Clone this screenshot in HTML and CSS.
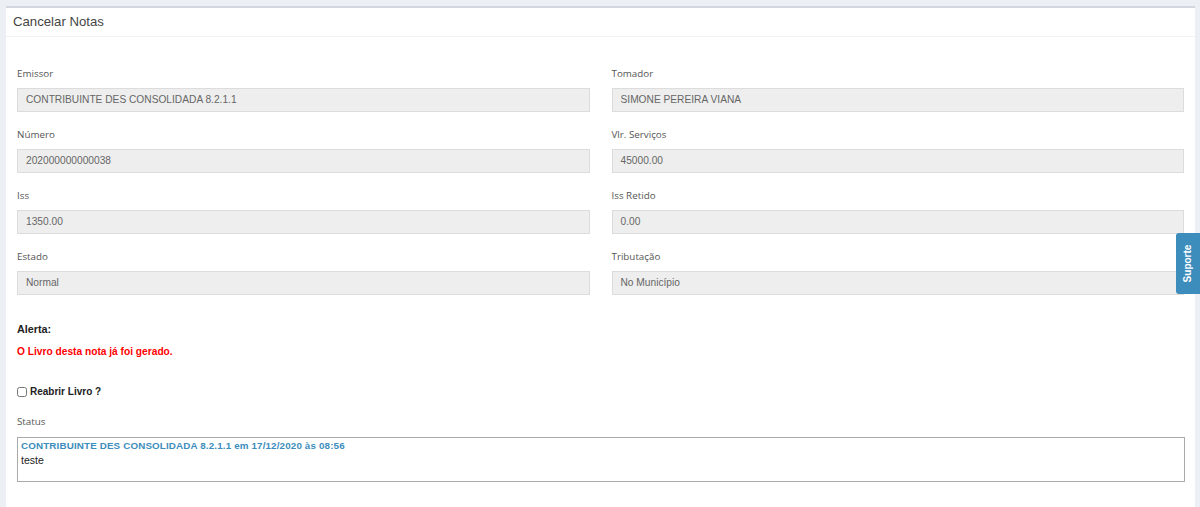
FILE: index.html
```html
<!DOCTYPE html>
<html lang="pt">
<head>
<meta charset="utf-8">
<title>Cancelar Notas</title>
<link rel="stylesheet" href="styles.css">
</head>
<body>
<div class="box">
  <div class="box-header">Cancelar Notas</div>
  <div class="box-body">
    <div class="grid">
      <div class="field"><label class="lbl">Emissor</label><div class="input">CONTRIBUINTE DES CONSOLIDADA 8.2.1.1</div></div>
      <div class="field"><label class="lbl">Tomador</label><div class="input">SIMONE PEREIRA VIANA</div></div>
      <div class="field"><label class="lbl">Número</label><div class="input">202000000000038</div></div>
      <div class="field"><label class="lbl">Vlr. Serviços</label><div class="input">45000.00</div></div>
      <div class="field"><label class="lbl">Iss</label><div class="input">1350.00</div></div>
      <div class="field"><label class="lbl">Iss Retido</label><div class="input">0.00</div></div>
      <div class="field"><label class="lbl">Estado</label><div class="input">Normal</div></div>
      <div class="field"><label class="lbl">Tributação</label><div class="input">No Município</div></div>
    </div>
    <div class="alert-title">Alerta:</div>
    <div class="alert-msg">O Livro desta nota já foi gerado.</div>
    <label class="check"><input type="checkbox"><span>Reabrir Livro ?</span></label>
    <label class="lbl status-lbl">Status</label>
    <div class="status">
      <div class="status-head">CONTRIBUINTE DES CONSOLIDADA 8.2.1.1 em 17/12/2020 às 08:56</div>
      <div class="status-text">teste</div>
    </div>
  </div>
</div>
<div class="suporte"><span>Suporte</span></div>
</body>
</html>
```
FILE: styles.css
```css
html, body { margin: 0; padding: 0; }
body {
  background: #ecf0f5;
  padding: 6px 5px 0 6px;
  font-family: "Liberation Sans", Arial, sans-serif;
  overflow: hidden;
  height: 507px;
  box-sizing: border-box;
}
.box {
  background: #fff;
  border-top: 2px solid #d2d6de;
  min-height: 520px;
}
.box-header {
  height: 28px;
  line-height: 28px;
  padding-left: 7px;
  font-size: 13.2px;
  color: #444;
  border-bottom: 1px solid #f2f2f2;
}
.box-body {
  padding: 29px 11px 0 11px;
}
.grid {
  display: grid;
  grid-template-columns: 1fr 1fr;
  column-gap: 22px;
}
.field { margin-bottom: 15px; }
.lbl {
  display: block;
  font-family: "Open Sans", sans-serif;
  font-size: 9.8px;
  line-height: 15px;
  color: #555;
  margin-bottom: 7px;
}
.input {
  height: 24px;
  box-sizing: border-box;
  border: 1px solid #dcdcdc;
  background: #eee;
  font-size: 10.2px;
  color: #666;
  line-height: 22px;
  padding-left: 8px;
}
.alert-title {
  margin-top: 12px;
  font-size: 10.8px;
  font-weight: bold;
  line-height: 15px;
  color: #222;
}
.alert-msg {
  margin-top: 7px;
  font-size: 10.2px;
  font-weight: bold;
  line-height: 15px;
  color: #f00;
}
.check {
  margin-top: 25px;
  display: flex;
  align-items: center;
  height: 15px;
  font-size: 10px;
  font-weight: bold;
  color: #222;
}
.check input {
  margin: 0 3px 0 0;
  width: 10px;
  height: 10px;
}
.status-lbl { margin-top: 15px; margin-bottom: 8px; }
.status {
  height: 45px;
  box-sizing: border-box;
  border: 1px solid #aaa;
  padding: 1px 3px;
  margin-right: -1px;
}
.status-head {
  font-size: 9.8px;
  letter-spacing: 0.15px;
  font-weight: bold;
  color: #3c8dbc;
  line-height: 14px;
}
.status-text {
  font-size: 10.5px;
  color: #222;
  line-height: 15px;
}
.suporte {
  position: fixed;
  right: 0;
  top: 233px;
  width: 24px;
  height: 61px;
  background: #3c8dbc;
  border-radius: 3px 0 0 3px;
  display: flex;
  align-items: center;
  justify-content: center;
}
.suporte span {
  transform: rotate(-90deg);
  color: #fff;
  font-weight: bold;
  font-size: 10px;
  white-space: nowrap;
}
```
